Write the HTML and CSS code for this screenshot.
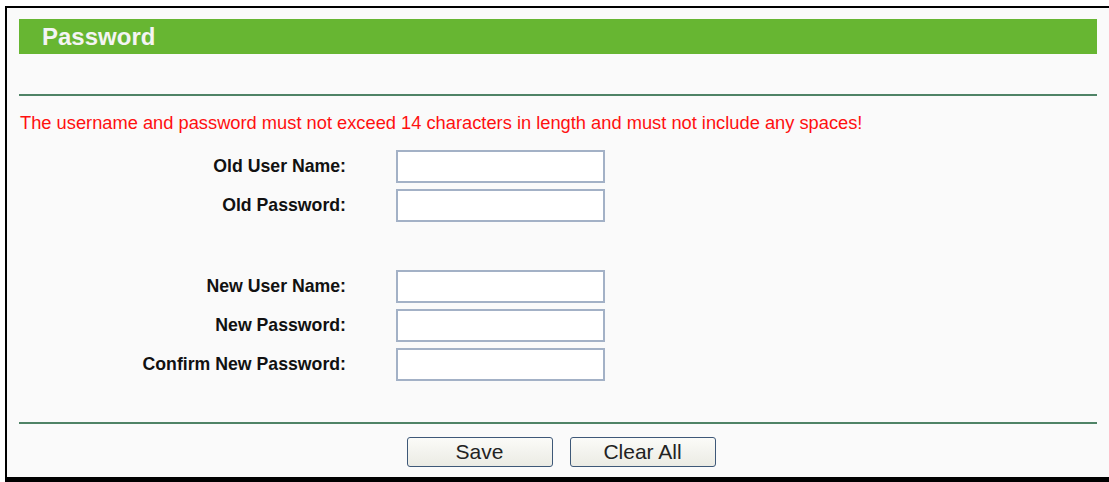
FILE: index.html
```html
<!DOCTYPE html>
<html lang="en">
<head>
    <meta charset="UTF-8">
    <title>Password</title>
    <link rel="stylesheet" href="styles.css">
</head>
<body>
    <div class="frame">
        <div class="panel">
            <div class="title-bar">Password</div>
            <hr class="divider top-divider">
            <p class="warning">The username and password must not exceed 14 characters in length and must not include any spaces!</p>

            <form class="pass-form">
                <div class="form-row">
                    <label class="form-label">Old User Name:</label>
                    <input type="text" class="text-box">
                </div>
                <div class="form-row">
                    <label class="form-label">Old Password:</label>
                    <input type="password" class="text-box">
                </div>
                <div class="form-spacer"></div>
                <div class="form-row">
                    <label class="form-label">New User Name:</label>
                    <input type="text" class="text-box">
                </div>
                <div class="form-row">
                    <label class="form-label">New Password:</label>
                    <input type="password" class="text-box">
                </div>
                <div class="form-row">
                    <label class="form-label">Confirm New Password:</label>
                    <input type="password" class="text-box">
                </div>
            </form>

            <hr class="divider bottom-divider">
            <div class="button-bar">
                <button class="btn">Save</button>
                <button class="btn">Clear All</button>
            </div>
        </div>
    </div>
</body>
</html>
```

FILE: styles.css
```css
* {
    margin: 0;
    padding: 0;
    box-sizing: border-box;
}

:root {
    --green: #67b632;
    --line: #4f8366;
    --red: #ff1010;
    --panel-bg: #fafafa;
}

html, body {
    background-color: #ffffff;
    overflow: hidden;
}

body {
    font-family: "Liberation Sans", Arial, sans-serif;
    padding: 6px 0 0 5px;
    height: 482px;
}

/* frame runs past the right edge of the window, as in the capture */
.frame {
    width: 1130px;
    border-top: 2px solid #000;
    border-left: 2px solid #000;
    border-bottom: 5px solid #000;
    background-color: var(--panel-bg);
    height: 476px;
}

.panel {
    width: 1078px;
    margin-left: 12px;
    padding-top: 11px;
}

.title-bar {
    background-color: var(--green);
    color: #f4f4f4;
    font-size: 24px;
    font-weight: bold;
    height: 35px;
    line-height: 35px;
    padding-left: 23px;
}

.divider {
    border: none;
    height: 2px;
    background-color: var(--line);
}

.top-divider {
    margin-top: 40px;
}

.warning {
    color: var(--red);
    font-size: 18.3px;
    line-height: 20px;
    margin-top: 17px;
    padding-left: 1px;
    white-space: nowrap;
}

.pass-form {
    margin-top: 14px;
}

.form-row {
    display: flex;
    align-items: center;
    height: 39px;
}

.form-spacer {
    height: 42px;
}

.form-label {
    width: 327px;
    text-align: right;
    font-size: 17.7px;
    font-weight: bold;
    color: #111;
}

.text-box {
    margin-left: 50px;
    width: 209px;
    height: 33px;
    border: 2px solid #a3b1c6;
    background-color: #fff;
}

.bottom-divider {
    margin-top: 38px;
}

.button-bar {
    display: flex;
    justify-content: center;
    gap: 17px;
    margin-top: 13px;
    padding-left: 6px;
}

.btn {
    width: 146px;
    height: 30px;
    border: 1px solid #3e5878;
    border-radius: 3px;
    background: linear-gradient(#fbfbf8, #ebebe4);
    font-family: "Liberation Sans", Arial, sans-serif;
    font-size: 21px;
    line-height: 26px;
    color: #222;
}
```
